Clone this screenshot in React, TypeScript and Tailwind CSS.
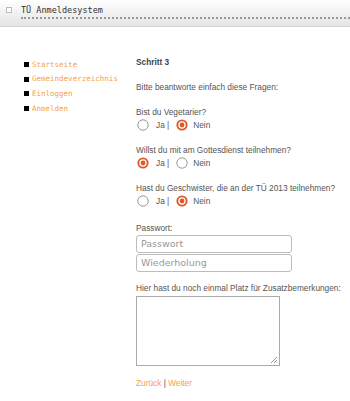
import React from "react";

function Radio({ checked }: { checked: boolean }) {
  return checked ? (
    <svg width="12" height="12" viewBox="0 0 12 12" className="block">
      <circle cx="6" cy="6" r="5.6" fill="#e0582a" />
      <circle cx="6" cy="6" r="3.7" fill="#ffffff" />
      <circle cx="6" cy="6" r="2.4" fill="#e0582a" />
    </svg>
  ) : (
    <svg width="12" height="12" viewBox="0 0 12 12" className="block">
      <circle cx="6" cy="6" r="5.2" fill="#fff" stroke="#9a9a9a" strokeWidth="1" />
    </svg>
  );
}

function Question({ q, ja, first }: { q: string; ja: boolean; first?: boolean }) {
  return (
    <div className={first ? "mt-[13px]" : "mt-[12px]"}>
      <div className="leading-[12px]">{q}</div>
      <div className="flex items-center h-[14px]">
        <span className="ml-[1px]"><Radio checked={ja} /></span>
        <span className="ml-[7px]">Ja |</span>
        <span className="ml-[7px]"><Radio checked={!ja} /></span>
        <span className="ml-[5px]">Nein</span>
      </div>
    </div>
  );
}

export default function App() {
  const mono = { fontFamily: '"DejaVu Sans Mono", "Liberation Mono", monospace' };
  const inputFont = { fontFamily: '"DejaVu Sans", sans-serif' };
  return (
    <div className="w-[350px] h-[401px] bg-white overflow-hidden" style={{ fontFamily: '"Liberation Sans", Arial, sans-serif' }}>
      <div className="h-[27px] bg-gradient-to-b from-white to-[#e4e4e4] border-b border-[#d6d6d6] flex items-start pl-[6px] pt-[5px]">
        <div className="w-[6px] h-[6px] border border-[#bbb] mt-[2px] bg-white shrink-0" />
        <div className="ml-[9px] flex-1">
          <div className="text-[8.5px] leading-[10px] text-[#333]" style={mono}>TÜ Anmeldesystem</div>
          <div className="mt-[2px] border-b-2 border-dotted border-[#999] w-full" />
        </div>
      </div>
      <div className="flex mt-[29px]">
        <ul className="w-[136px] shrink-0 pl-[24px] pt-[1px]" style={mono}>
          {["Startseite", "Gemeindeverzeichnis", "Einloggen", "Anmelden"].map((t) => (
            <li key={t} className="flex items-center h-[14.7px]">
              <span className="w-[5px] h-[5px] bg-black shrink-0" />
              <span className="ml-[3px] text-[7.5px] text-[#f7a04c] whitespace-nowrap">{t}</span>
            </li>
          ))}
        </ul>
        <div className="flex-1 text-[8.3px] text-[#555] whitespace-nowrap">
          <div className="font-bold leading-[12px] text-[#444]">Schritt 3</div>
          <div className="mt-[13px] leading-[12px]">Bitte beantworte einfach diese Fragen:</div>
          <Question q="Bist du Vegetarier?" ja={false} first />
          <Question q="Willst du mit am Gottesdienst teilnehmen?" ja={true} />
          <Question q="Hast du Geschwister, die an der TÜ 2013 teilnehmen?" ja={false} />
          <div className="mt-[14px] leading-[12px]">Passwort:</div>
          <div className="mt-[1px] w-[156px] h-[18px] border border-[#bdbdbd] rounded-[3px] flex items-center px-[4px] text-[9.5px] text-[#999]" style={inputFont}>Passwort</div>
          <div className="mt-[1px] w-[156px] h-[18px] border border-[#bdbdbd] rounded-[3px] flex items-center px-[4px] text-[9.5px] text-[#999]" style={inputFont}>Wiederholung</div>
          <div className="mt-[10px] leading-[12px]">Hier hast du noch einmal Platz für Zusatzbemerkungen:</div>
          <div className="relative mt-[2px] w-[144px] h-[70px] border border-[#aaa]">
            <svg width="8" height="8" viewBox="0 0 8 8" className="absolute right-[1px] bottom-[1px]">
              <path d="M7 1 L1 7 M7 4 L4 7 M7 6.5 L6.5 7" stroke="#999" strokeWidth="1" />
            </svg>
          </div>
          <div className="mt-[11px] leading-[12px]">
            <span className="text-[#f7a04c]">Zurück</span> | <span className="text-[#f7a04c]">Weiter</span>
          </div>
        </div>
      </div>
    </div>
  );
}
